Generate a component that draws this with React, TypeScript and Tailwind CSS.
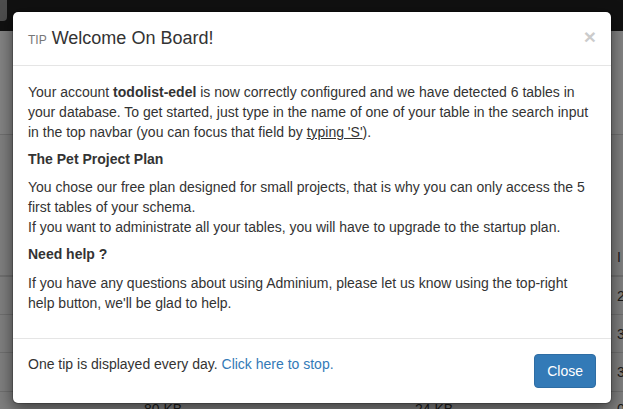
import React from "react";

function BgRow({ h, right, children, thick }: { h: string; right?: string; children?: React.ReactNode; thick?: boolean }) {
  return (
    <div className={`flex items-end ${h} ${thick ? "border-b-2" : "border-b"} border-[#6f6f6f]`}>
      {children}
      {right !== undefined && <div className="ml-auto w-[6px] overflow-hidden pb-[8px] text-[#1a1a1a]">{right}</div>}
    </div>
  );
}

export default function App() {
  return (
    <div
      className="relative w-[623px] h-[409px] overflow-hidden bg-[#7f7f7f] text-[14px] leading-[20px] text-[#333]"
      style={{ fontFamily: '"Liberation Sans", Arial, Helvetica, sans-serif' }}
    >
      {/* page behind the backdrop */}
      <div className="flex h-[31px] bg-[#111]">
        <div className="w-[7px] h-[21px] bg-[#4d4d4d] rounded-br-[4px]" />
      </div>
      <div className="flex flex-col">
        <div className="h-[104px] border-b border-[#6f6f6f] bg-[#838383]" />
        <BgRow h="h-[142px]" right="I" thick />
        <div className="flex h-[38px] items-center border-b border-[#6f6f6f]">
          <div className="ml-auto w-[6px] overflow-hidden text-[#1a1a1a]">2</div>
        </div>
        <div className="flex h-[38px] items-center border-b border-[#6f6f6f]">
          <div className="ml-auto w-[6px] overflow-hidden text-[#1a1a1a]">3</div>
        </div>
        <div className="flex h-[39px] items-center border-b border-[#6f6f6f]">
          <div className="ml-auto w-[6px] overflow-hidden text-[#1a1a1a]">3</div>
        </div>
        <div className="flex h-[38px] items-start pt-[7px] text-[#1a1a1a]">
          <div className="pl-[144px] w-[415px]">80 KB</div>
          <div>24 KB</div>
          <div className="ml-auto w-[6px] overflow-hidden">0</div>
        </div>
      </div>

      {/* modal */}
      <div className="absolute left-[12px] top-[11px] w-[600px] rounded-[6px] border border-black/20 bg-white bg-clip-padding shadow-[0_5px_15px_rgba(0,0,0,0.5)]">
        <div className="flex items-start border-b border-[#e5e5e5] px-[15px] pt-[15px] pb-[15px]">
          <h4 className="h-[23px] text-[18px] leading-[23px] font-normal text-[#333]">
            <small className="text-[12px] leading-none text-[#777] uppercase">Tip</small>{" "}
            Welcome On Board!
          </h4>
          <button className="ml-auto -mt-[1px] text-[21px] leading-none font-bold text-black opacity-20">×</button>
        </div>
        <div className="block px-[15px] pt-[16px] pb-[15px]">
          <p className="mb-[10px]">
            Your account <b>todolist-edel</b> is now correctly configured and we have detected 6 tables in your database. To get started, just type in the name of one of your table in the search input in the top navbar (you can focus that field by <u>typing 'S'</u>).
          </p>
          <h5 className="mt-[10px] mb-[10px] text-[14px] leading-[1.1] font-bold">The Pet Project Plan</h5>
          <p className="mb-[10px]">
            You chose our free plan designed for small projects, that is why you can only access the 5 first tables of your schema.
            <br />
            If you want to administrate all your tables, you will have to upgrade to the startup plan.
          </p>
          <h5 className="mt-[10px] mb-[10px] text-[14px] leading-[1.1] font-bold">Need help ?</h5>
          <p className="mb-[10px]">
            If you have any questions about using Adminium, please let us know using the top-right help button, we'll be glad to help.
          </p>
        </div>
        <div className="flex items-start border-t border-[#e5e5e5] p-[15px]">
          <div>
            One tip is displayed every day. <a className="text-[#337ab7]">Click here to stop.</a>
          </div>
          <button className="ml-auto rounded-[4px] border border-[#2e6da4] bg-[#337ab7] px-[12px] py-[6px] text-[14px] leading-[20px] text-white">
            Close
          </button>
        </div>
      </div>
    </div>
  );
}
